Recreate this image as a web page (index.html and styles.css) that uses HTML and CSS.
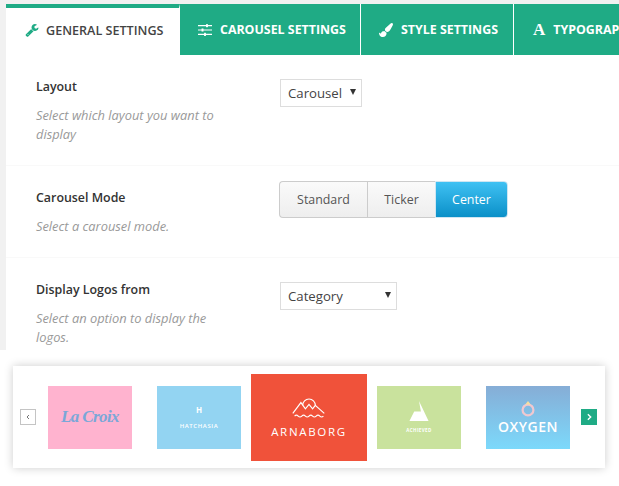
FILE: index.html
```html
<!DOCTYPE html>
<html lang="en">
<head>
    <meta charset="UTF-8">
    <title>Logo Carousel Settings</title>
    <link rel="stylesheet" href="styles.css">
</head>
<body>
    <div class="panel">
        <div class="tabs">
            <div class="tab tab-active tab-general">
                <svg class="tab-icon" viewBox="0 0 1792 1792"><path d="M448 1472q0-26-19-45t-45-19-45 19-19 45 19 45 45 19 45-19 19-45zm644-420l-682 682q-37 37-90 37-52 0-91-37l-106-108q-38-36-38-90 0-53 38-91l681-681q39 98 114.5 173.5t173.5 114.5zm634-435q0 39-23 106-47 134-164.5 217.5t-258.5 83.5q-185 0-316.5-131.5t-131.5-316.5 131.5-316.5 316.5-131.5q58 0 121.5 16.5t107.5 46.5q16 11 16 28t-16 28l-293 169v224l193 107q5-3 79-48.5t135.5-81 70.5-35.5q15 0 23.5 10t8.5 25z"/></svg>
                General Settings
            </div>
            <div class="tab tab-carousel">
                <svg class="tab-icon" viewBox="0 0 14 14"><path d="M0 2h14v1.2H0zM0 6.4h14v1.2H0zM0 10.800h14V12H0z"/><rect x="8" y="1" width="2" height="3.200" rx=".4"/><rect x="3.500" y="5.400" width="2" height="3.200" rx=".4"/><rect x="6" y="9.800" width="2" height="3.200" rx=".4"/></svg>
                Carousel Settings
            </div>
            <div class="tab tab-style">
                <svg class="tab-icon" viewBox="0 0 1792 1792"><path d="M1615 0q70 0 122.500 46.500t52.500 116.500q0 63-45 151-332 629-465 752-97 91-218 91-126 0-216.500-92.500t-90.500-219.500q0-128 92-212l638-579q59-54 130-54zm-909 1034q39 76 106.500 130t150.500 76l1 71q4 213-129.500 347t-348.500 134q-123 0-218-46.500t-152.500-127.500-86.500-183-29-220q7 5 41 30t62 44.500 59 36.500 46 17q41 0 55-37 25-66 57.500-112.500t69.500-76 88-47.500 103-25.500 125-10.500z"/></svg>
                Style Settings
            </div>
            <div class="tab tab-type">
                <span class="type-glyph">A</span>
                Typography
            </div>
        </div>

        <div class="row row-layout">
            <div class="row-text">
                <div class="row-label">Layout</div>
                <div class="row-desc">Select which layout you want to display</div>
            </div>
            <div class="select select-layout">Carousel<span class="caret"></span></div>
        </div>

        <div class="row row-mode">
            <div class="row-text">
                <div class="row-label">Carousel Mode</div>
                <div class="row-desc">Select a carousel mode.</div>
            </div>
            <div class="btn-group">
                <div class="btn btn-standard">Standard</div>
                <div class="btn btn-ticker">Ticker</div>
                <div class="btn btn-center">Center</div>
            </div>
        </div>

        <div class="row row-source">
            <div class="row-text">
                <div class="row-label">Display Logos from</div>
                <div class="row-desc">Select an option to display the logos.</div>
            </div>
            <div class="select select-source">Category<span class="caret"></span></div>
        </div>
    </div>

    <div class="carousel">
        <div class="arrow arrow-prev">
            <svg viewBox="0 0 14 14"><path d="M8 5 6 7l2 2" fill="none" stroke="#777" stroke-width="1"/></svg>
        </div>
        <div class="logo logo-pink"><span class="lacroix">La Croix</span></div>
        <div class="logo logo-blue">
            <span class="hatch-mark">H</span>
            <span class="hatch-name">HATCHASIA</span>
        </div>
        <div class="logo logo-red">
            <svg class="arnaborg-mark" viewBox="0 0 40 26"><g fill="none" stroke="#fff" stroke-width="1.300"><path d="M13 10a7 7 0 0 1 14 0"/><path d="M2 19 11 7l5 7 4-5 4 5 3-4 10 9"/><path d="M4 22q2-2 4 0t4 0 4 0 4 0 4 0 4 0 4 0 4 0"/></g></svg>
            <span class="arnaborg-name">ARNABORG</span>
        </div>
        <div class="logo logo-green">
            <svg class="achieved-mark" viewBox="0 0 20 22"><path d="M10 0 20 21H0l5-10h7z" fill="#fff"/></svg>
            <span class="achieved-name">ACHIEVED</span>
        </div>
        <div class="logo logo-sky">
            <svg class="oxygen-mark" viewBox="0 0 20 20"><circle cx="10" cy="11" r="6" fill="none" stroke="#f0c8d0" stroke-width="2.500"/><path d="M10 1l3 4H7z" fill="#f6dfa0"/></svg>
            <span class="oxygen-name">OXYGEN</span>
        </div>
        <div class="arrow arrow-next">
            <svg viewBox="0 0 14 14"><path d="M6 4.500 8.500 7 6 9.500" fill="none" stroke="#fff" stroke-width="1.200"/></svg>
        </div>
    </div>
</body>
</html>
```

FILE: styles.css
```css
html, body {
    margin: 0;
    padding: 0;
}
body {
    width: 619px;
    height: 486px;
    overflow: hidden;
    background-color: #ffffff;
    font-family: "Open Sans", sans-serif;
    font-size: 13px;
    color: #444444;
}

/* settings panel */
.panel {
    height: 350px;
    padding: 4px 0 0 6px;
    box-sizing: border-box;
    overflow: hidden;
    background: linear-gradient(#f1f1f1, #f1f1f1) left top / 100% 4px no-repeat,
                linear-gradient(#f1f1f1, #f1f1f1) left top / 6px 100% no-repeat;
}
.tabs {
    display: flex;
    height: 51px;
    white-space: nowrap;
}
.tab {
    display: flex;
    align-items: center;
    flex-shrink: 0;
    box-sizing: border-box;
    height: 51px;
    border-right: 1px solid #ffffff;
    background-color: #1fab85;
    color: #ffffff;
    font-weight: 700;
    font-size: 12.400px;
    text-transform: uppercase;
}
.tab-general {
    width: 174px;
    padding: 0 0 0 19px;
}
.tab-active {
    border-top: 4px solid #1fab85;
    background-color: #ffffff;
    color: #444444;
    font-weight: 600;
    font-size: 12.600px;
    padding-bottom: 3px;
}
.tab-carousel {
    width: 181px;
    padding-left: 18px;
}
.tab-style {
    width: 153px;
    padding-left: 18px;
}
.tab-type {
    width: 160px;
    padding-left: 19px;
    border-right: 0;
}
.tab-icon {
    width: 14px;
    height: 14px;
    margin-right: 8px;
    fill: #ffffff;
}
.tab-general .tab-icon {
    margin-right: 7px;
}
.tab-active .tab-icon {
    fill: #1fab85;
}
.type-glyph {
    margin-right: 8px;
    font-family: "Liberation Serif", serif;
    font-size: 17px;
    font-weight: 700;
}

.row {
    display: flex;
    box-sizing: border-box;
    padding-left: 30px;
    border-bottom: 1px solid #f9f9f9;
}
.row-layout {
    height: 111px;
    padding-top: 22px;
}
.row-mode {
    height: 92px;
    padding-top: 15px;
}
.row-source {
    padding-top: 22px;
    border-bottom: 0;
}
.row-text {
    width: 190px;
    margin-right: 54px;
}
.row-mode .row-text {
    padding-top: 7px;
}
.row-label {
    height: 20px;
    line-height: 20px;
    font-size: 12.400px;
    font-weight: 600;
    color: #333333;
}
.row-desc {
    margin-top: 8.500px;
    line-height: 19.500px;
    font-size: 12.850px;
    font-style: italic;
    color: #999999;
}

.select {
    position: relative;
    box-sizing: border-box;
    height: 28px;
    padding-left: 7px;
    border: 1.500px solid #dddddd;
    line-height: 27px;
    font-size: 13.200px;
    color: #444444;
}
.select-layout {
    width: 82px;
    margin-top: 2px;
}
.select-source {
    width: 117px;
    margin-top: 2px;
}
.caret {
    position: absolute;
    top: 9px;
    right: 5px;
    border-left: 3px solid transparent;
    border-right: 3px solid transparent;
    border-top: 6px solid #333333;
}

.btn-group {
    display: flex;
    height: 37px;
    margin-left: -1px;
}
.btn {
    box-sizing: border-box;
    height: 37px;
    border: 1px solid #cccccc;
    border-right: 0;
    background: linear-gradient(#fafafa, #eeeeee);
    line-height: 35px;
    font-size: 12.400px;
    text-align: center;
    color: #555555;
}
.btn-standard {
    width: 88px;
    border-radius: 4px 0 0 4px;
}
.btn-ticker {
    width: 68px;
}
.btn-center {
    width: 73px;
    border: 1px solid #cfe6f2;
    border-radius: 0 4px 4px 0;
    background: linear-gradient(#3fc1f3, #0b90c8);
    color: #ffffff;
}

/* logo carousel preview */
.carousel {
    display: flex;
    align-items: center;
    box-sizing: border-box;
    width: 592px;
    height: 102px;
    margin: 16px 0 0 13px;
    padding-left: 7px;
    background-color: #ffffff;
    box-shadow: 0 0 9px rgba(0, 0, 0, 0.2);
}
.arrow {
    display: flex;
    flex-shrink: 0;
    box-sizing: border-box;
    width: 16px;
    height: 16px;
}
.arrow svg {
    width: 100%;
    height: 100%;
}
.arrow-prev {
    border: 1px solid #c4c4c4;
    margin-right: 12px;
}
.arrow-next {
    margin-left: 11px;
    background-color: #1fab85;
}
.logo {
    display: flex;
    flex-direction: column;
    align-items: center;
    justify-content: center;
    flex-shrink: 0;
    width: 84px;
    height: 63px;
    margin-right: 25px;
    color: #ffffff;
}
.logo-pink {
    background-color: #ffb3cf;
}
.logo-blue {
    margin-right: 10px;
    background-color: #93d4f2;
}
.logo-red {
    width: 116px;
    height: 87px;
    margin-right: 10px;
    background-color: #f0523a;
}
.logo-green {
    background-color: #c9e29d;
}
.logo-sky {
    margin-right: 0;
    background: linear-gradient(#86add6, #7cd9fb);
}
.lacroix {
    font-family: "Liberation Serif", serif;
    font-style: italic;
    font-weight: 700;
    font-size: 17px;
    letter-spacing: -0.6px;
    color: #7aa7d8;
}
.hatch-mark {
    font-size: 8px;
    font-weight: 700;
    line-height: 10px;
}
.hatch-name {
    margin-top: 7px;
    font-size: 6px;
    font-weight: 600;
    letter-spacing: 0.6px;
}
.arnaborg-mark {
    width: 36px;
    height: 24px;
}
.arnaborg-name {
    margin-top: 5px;
    font-size: 11.500px;
    line-height: 14px;
    letter-spacing: 1.700px;
}
.achieved-mark {
    width: 20px;
    height: 21px;
}
.achieved-name {
    margin-top: 5px;
    font-size: 4.500px;
    font-weight: 700;
    letter-spacing: 0.400px;
}
.oxygen-mark {
    width: 18px;
    height: 20px;
}
.oxygen-name {
    font-size: 14px;
    font-weight: 600;
    line-height: 16px;
    letter-spacing: 0.500px;
}
```
